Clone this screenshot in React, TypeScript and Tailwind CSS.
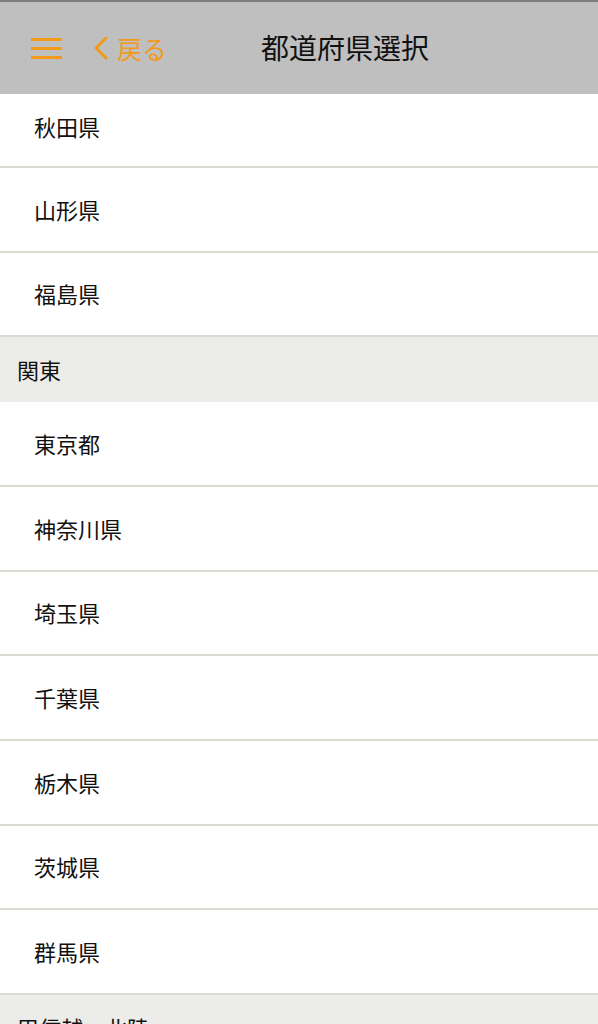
const font = { fontFamily: '"Noto Sans CJK JP", "Noto Sans", sans-serif' };

type Item = { type: 'section' | 'pref'; name: string };

const items: Item[] = [
  { type: 'pref', name: '山形県' },
  { type: 'pref', name: '福島県' },
  { type: 'section', name: '関東' },
  { type: 'pref', name: '東京都' },
  { type: 'pref', name: '神奈川県' },
  { type: 'pref', name: '埼玉県' },
  { type: 'pref', name: '千葉県' },
  { type: 'pref', name: '栃木県' },
  { type: 'pref', name: '茨城県' },
  { type: 'pref', name: '群馬県' },
  { type: 'section', name: '甲信越・北陸' },
];

export default function App() {
  return (
    <div className="w-[598px] h-[1024px] overflow-hidden bg-white text-[#111]" style={font}>
      <header className="h-[94px] border-t-2 border-[#7c7c7c] bg-[#bfbfbf] flex items-center">
        <button className="ml-[31px] w-[31px] flex flex-col gap-[6px]">
          <span className="block h-[3px] bg-[#f39a1c]" />
          <span className="block h-[3px] bg-[#f39a1c]" />
          <span className="block h-[3px] bg-[#f39a1c]" />
        </button>
        <button className="ml-[31px] flex items-center text-[#f39a1c]">
          <svg width="16" height="24" viewBox="0 0 16 24" fill="none">
            <path d="M13 2 L3 12 L13 22" stroke="#f39a1c" strokeWidth="3" strokeLinecap="round" strokeLinejoin="round" />
          </svg>
          <span className="ml-[8px] text-[25px] leading-none">戻る</span>
        </button>
        <h1 className="ml-[94px] text-[28px] leading-none mb-[3px]">都道府県選択</h1>
      </header>
      <ul>
        <li className="h-[74px] border-b-2 border-[#dcdbd3] flex items-center pl-[34px] pb-[8px] text-[22px]">
          秋田県
        </li>
        {items.map((it) =>
          it.type === 'section' ? (
            <li key={it.name} className="h-[65px] bg-[#ececea] flex items-center pl-[17px] text-[22px]">
              {it.name}
            </li>
          ) : (
            <li key={it.name} className="h-[84.67px] border-b-2 border-[#dcdbd3] flex items-center pl-[34px] text-[22px]">
              {it.name}
            </li>
          )
        )}
      </ul>
    </div>
  );
}
